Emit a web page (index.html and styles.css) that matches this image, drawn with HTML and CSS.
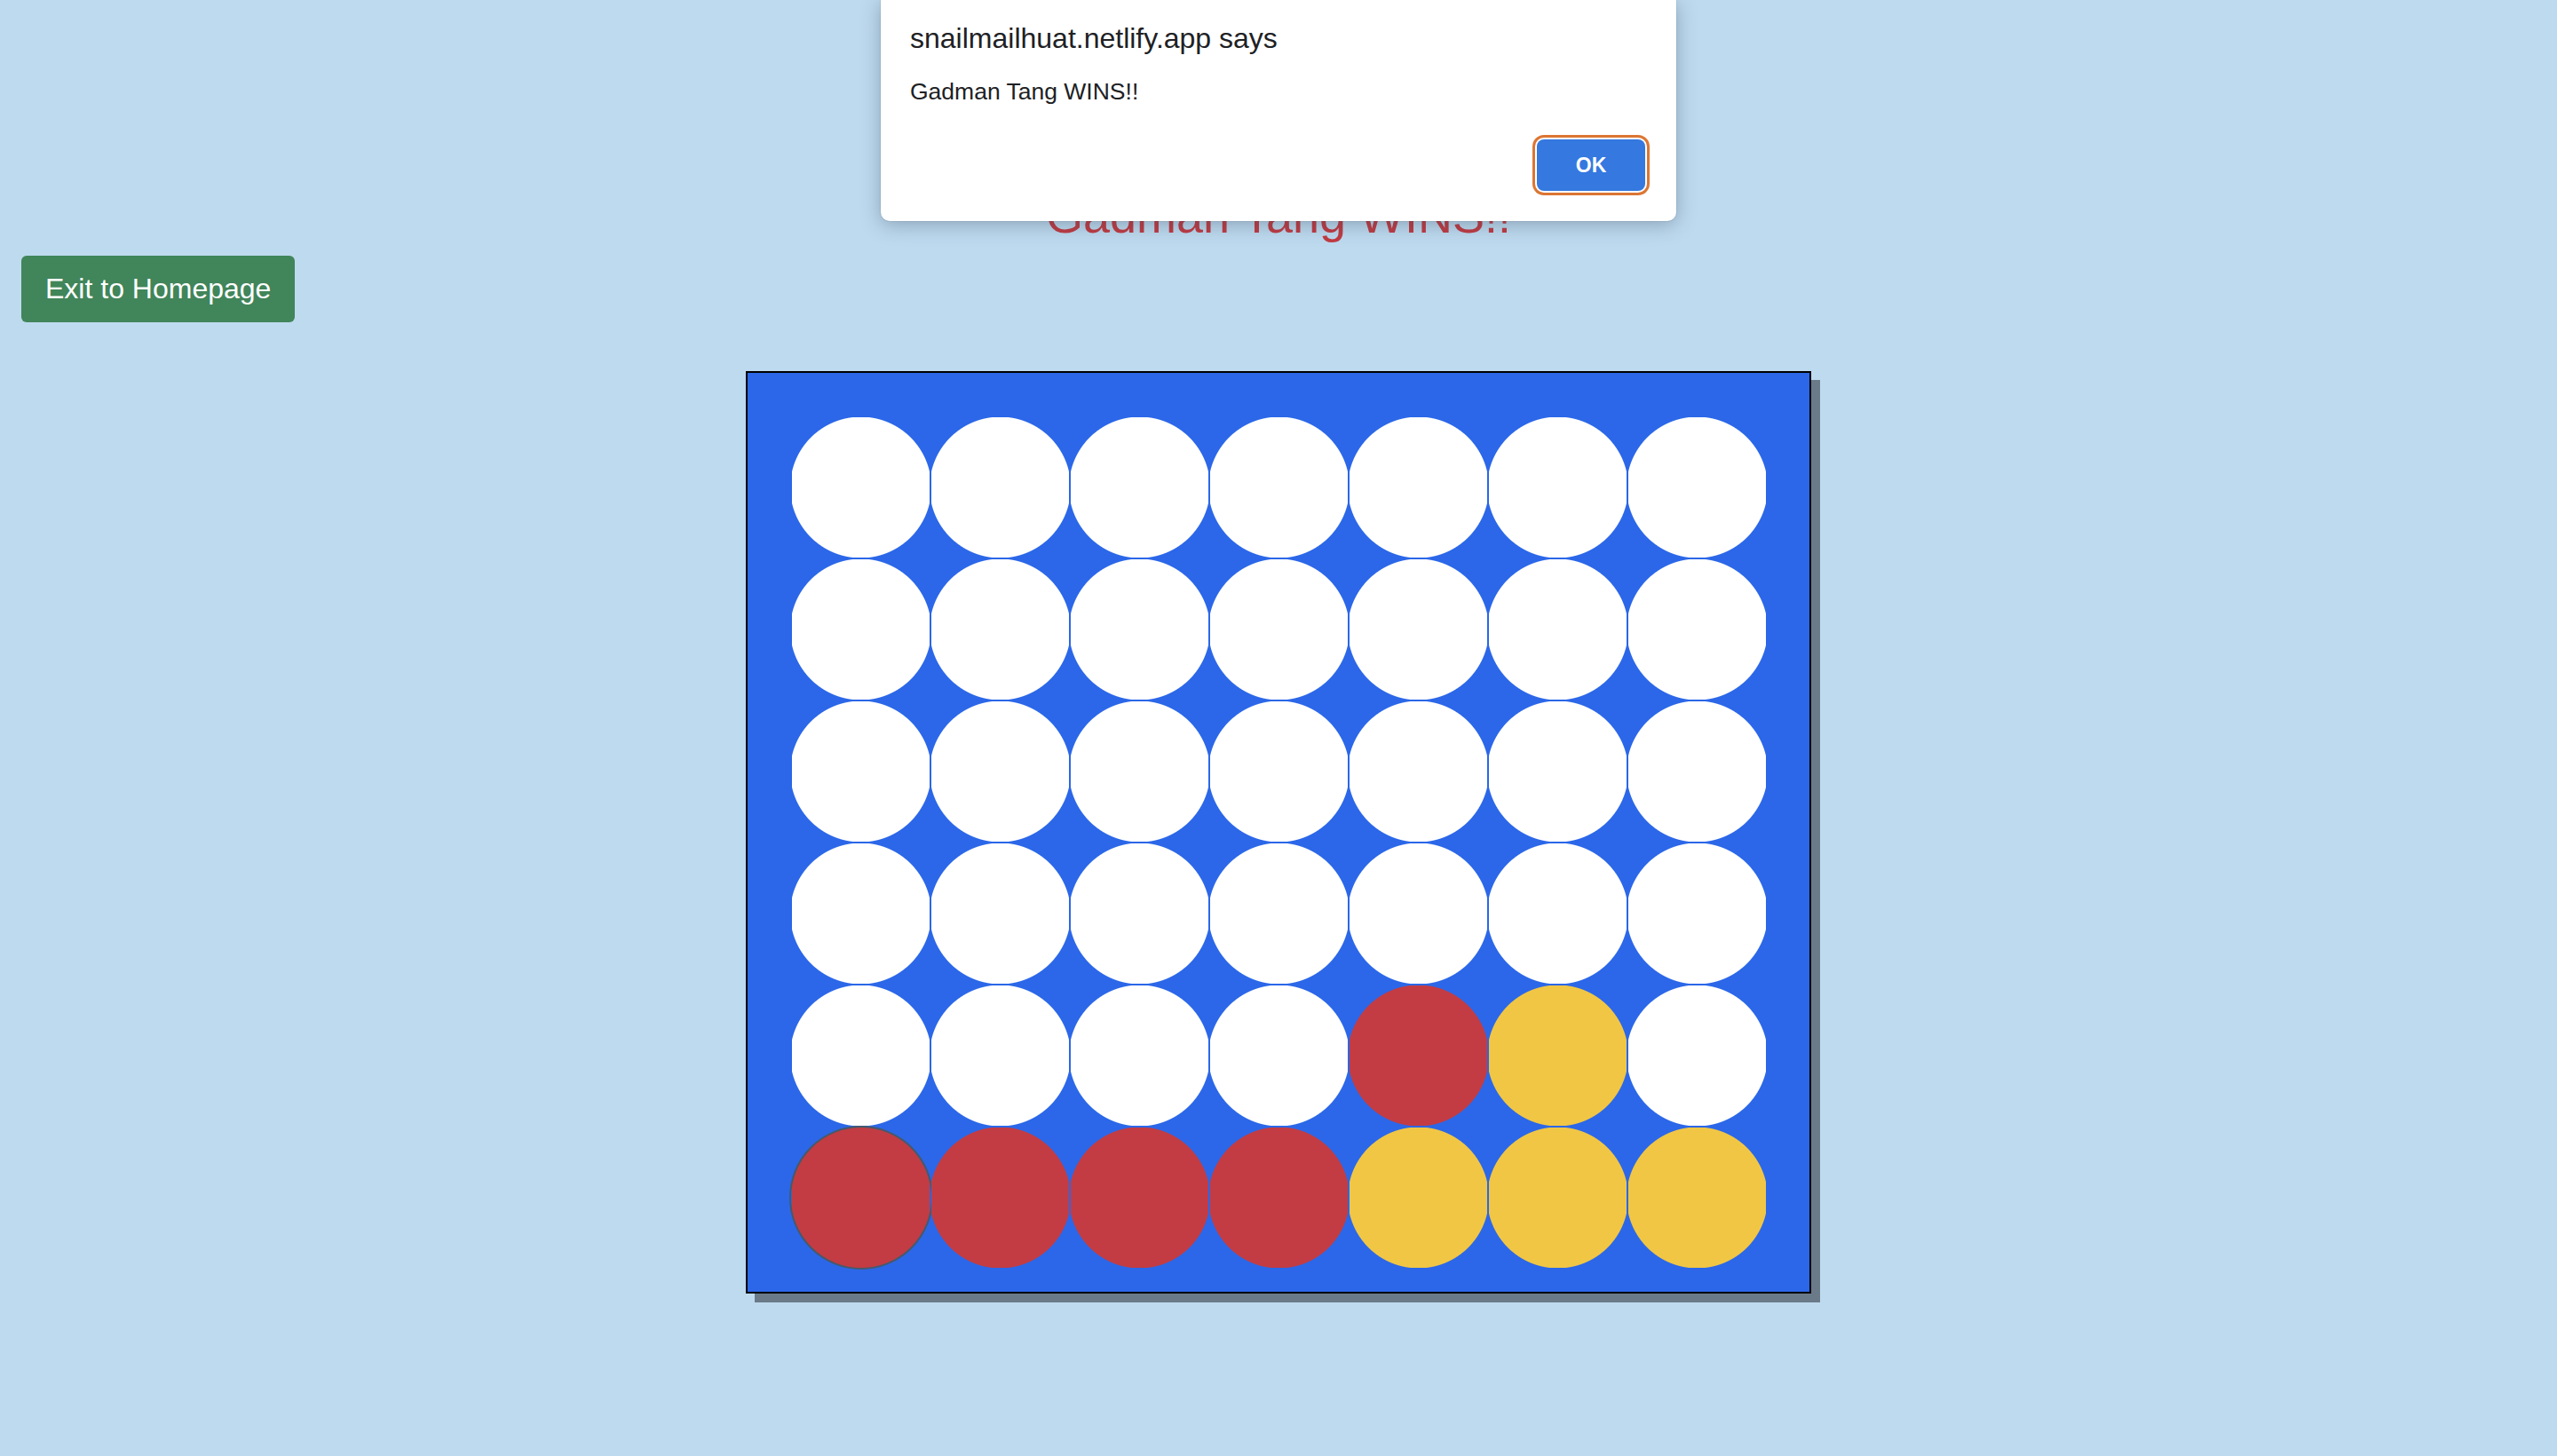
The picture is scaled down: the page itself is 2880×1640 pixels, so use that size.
FILE: index.html
```html
<!DOCTYPE html>
<html lang="en">
<head>
<meta charset="utf-8">
<title>Connect Four</title>
<link rel="stylesheet" href="styles.css">
</head>
<body>
  <main class="page">
    <h1 class="winner">Gadman Tang WINS!!</h1>
    <div class="actions">
      <button class="exit-btn" type="button">Exit to Homepage</button>
    </div>
    <div class="board-wrap">
      <div class="board">
        <div class="cell"></div><div class="cell"></div><div class="cell"></div><div class="cell"></div><div class="cell"></div><div class="cell"></div><div class="cell"></div>
        <div class="cell"></div><div class="cell"></div><div class="cell"></div><div class="cell"></div><div class="cell"></div><div class="cell"></div><div class="cell"></div>
        <div class="cell"></div><div class="cell"></div><div class="cell"></div><div class="cell"></div><div class="cell"></div><div class="cell"></div><div class="cell"></div>
        <div class="cell"></div><div class="cell"></div><div class="cell"></div><div class="cell"></div><div class="cell"></div><div class="cell"></div><div class="cell"></div>
        <div class="cell"></div><div class="cell"></div><div class="cell"></div><div class="cell"></div><div class="cell red"></div><div class="cell yellow"></div><div class="cell"></div>
        <div class="cell red focused"></div><div class="cell red"></div><div class="cell red"></div><div class="cell red"></div><div class="cell yellow"></div><div class="cell yellow"></div><div class="cell yellow"></div>
      </div>
    </div>
  </main>

  <div class="dialog" role="alertdialog">
    <div class="dialog-title">snailmailhuat.netlify.app says</div>
    <div class="dialog-msg">Gadman Tang WINS!!</div>
    <div class="dialog-actions">
      <button class="ok-btn" type="button">OK</button>
    </div>
  </div>
</body>
</html>
```
FILE: styles.css
```css
html, body {
  margin: 0;
  padding: 0;
}
body {
  background: #bedaef;
  font-family: "Liberation Sans", Arial, sans-serif;
  min-height: 1640px;
}
.page {
  padding: 0 24px;
}
.winner {
  margin: 212px 0 0;
  font-size: 54px;
  line-height: 62px;
  font-weight: normal;
  color: #c13b42;
  text-align: center;
}
.actions {
  margin-top: 14px;
  display: flex;
}
.exit-btn {
  font-family: "Liberation Sans", Arial, sans-serif;
  font-size: 32px;
  line-height: 49px;
  padding: 13px 27px;
  color: #ffffff;
  background: #41855a;
  border: none;
  border-radius: 6px;
}
.board-wrap {
  margin-top: 55px;
  display: flex;
  justify-content: center;
}
.board {
  display: grid;
  grid-template-columns: repeat(7, 155px);
  grid-auto-rows: 158px;
  column-gap: 2px;
  row-gap: 2px;
  padding: 50px 49px 27px 50px;
  background: #2b67e8;
  border: 2px solid #000;
  box-shadow: 10px 10px 0 #6b7a89;
}
.cell {
  --piece: #ffffff;
  position: relative;
  background: radial-gradient(circle at 50% 50%, var(--piece) 0, var(--piece) 79px, rgba(255, 255, 255, 0) 80px);
}
.cell.red {
  --piece: #c33c43;
}
.cell.yellow {
  --piece: #f1c644;
}
.cell.focused::after {
  content: "";
  position: absolute;
  left: 50%;
  top: 50%;
  width: 162px;
  height: 162px;
  margin: -81px 0 0 -81px;
  box-sizing: border-box;
  border: 2px solid #46596b;
  border-radius: 50%;
}

.dialog {
  position: absolute;
  top: 0;
  left: 50%;
  transform: translateX(-50%);
  width: 896px;
  box-sizing: border-box;
  padding: 25px 35px 34px 33px;
  background: #ffffff;
  border-radius: 0 0 10px 10px;
  box-shadow: 0 4px 22px rgba(40, 60, 80, 0.35), 0 0 0 1px rgba(0, 0, 0, 0.06);
  color: #202124;
}
.dialog-title {
  font-size: 32px;
  line-height: 36px;
}
.dialog-msg {
  margin-top: 27px;
  font-size: 26.5px;
  line-height: 30px;
}
.dialog-actions {
  margin-top: 39px;
  display: flex;
  justify-content: flex-end;
}
.ok-btn {
  width: 122px;
  height: 58px;
  font-family: "Liberation Sans", Arial, sans-serif;
  font-size: 23px;
  font-weight: bold;
  color: #ffffff;
  background: #3478e0;
  border: none;
  border-radius: 8px;
  box-shadow: 0 0 0 2px #ffffff, 0 0 0 5px #dc7633;
}
```
